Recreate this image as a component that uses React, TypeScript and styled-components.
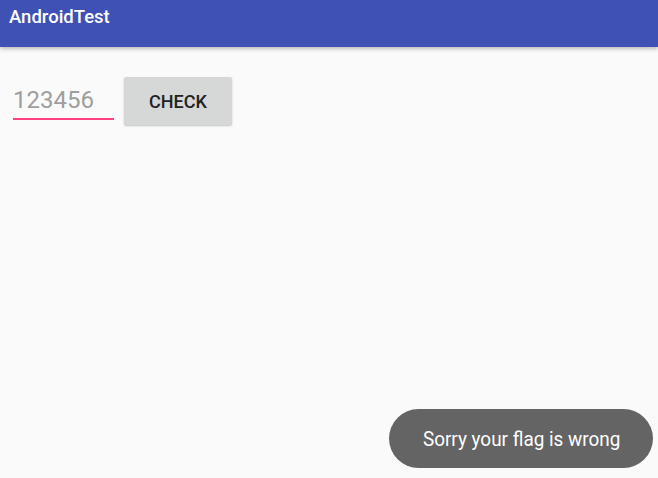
import React from "react";
import styled, { createGlobalStyle } from "styled-components";

const Global = createGlobalStyle`
  html, body { margin: 0; padding: 0; }
  body { background: #fafafa; font-family: Roboto, "Noto Sans", sans-serif; }
`;

const Screen = styled.div`
  position: relative;
  width: 658px;
  height: 478px;
  background: #fafafa;
  overflow: hidden;
  display: flex;
  flex-direction: column;
`;

const AppBar = styled.header`
  height: 47px;
  background: #3f51b5;
  box-shadow: 0 2px 4px rgba(0, 0, 0, 0.25);
  display: flex;
  align-items: flex-start;
  padding: 6px 0 0 9px;
  box-sizing: border-box;
  z-index: 1;
`;

const Title = styled.h1`
  margin: 0;
  color: #ffffff;
  font-family: Roboto, sans-serif;
  font-weight: 500;
  font-size: 18.5px;
  line-height: 22px;
`;

const Row = styled.div`
  display: flex;
  align-items: flex-start;
  gap: 10px;
  padding: 29px 0 0 13px;
`;

const Field = styled.div`
  width: 101px;
  height: 44px;
  border-bottom: 2px solid #ff4081;
  box-sizing: border-box;
  display: flex;
  align-items: flex-end;
  padding-bottom: 4px;
`;

const Hint = styled.span`
  font-family: Roboto, sans-serif;
  font-size: 24px;
  line-height: 28px;
  color: #9e9e9e;
`;

const Button = styled.button`
  width: 108px;
  height: 48px;
  margin-top: 1px;
  border: none;
  border-radius: 2px;
  background: #d6d7d7;
  box-shadow: 0 1px 2px rgba(0, 0, 0, 0.22);
  font-family: Roboto, sans-serif;
  font-weight: 500;
  font-size: 18px;
  color: #222222;
  padding: 0;
`;

const Toast = styled.div`
  position: absolute;
  left: 389px;
  top: 409px;
  width: 264px;
  height: 59px;
  border-radius: 30px;
  background: #646464;
  display: flex;
  align-items: center;
  justify-content: center;
`;

const ToastText = styled.span`
  font-family: Roboto, sans-serif;
  font-size: 21px;
  color: #ffffff;
  display: inline-block;
  transform: scaleX(0.9);
  margin-left: 2px;
`;

export default function App() {
  return (
    <>
      <Global />
      <Screen>
        <AppBar>
          <Title>AndroidTest</Title>
        </AppBar>
        <Row>
          <Field>
            <Hint>123456</Hint>
          </Field>
          <Button>CHECK</Button>
        </Row>
        <Toast>
          <ToastText>Sorry your flag is wrong</ToastText>
        </Toast>
      </Screen>
    </>
  );
}
